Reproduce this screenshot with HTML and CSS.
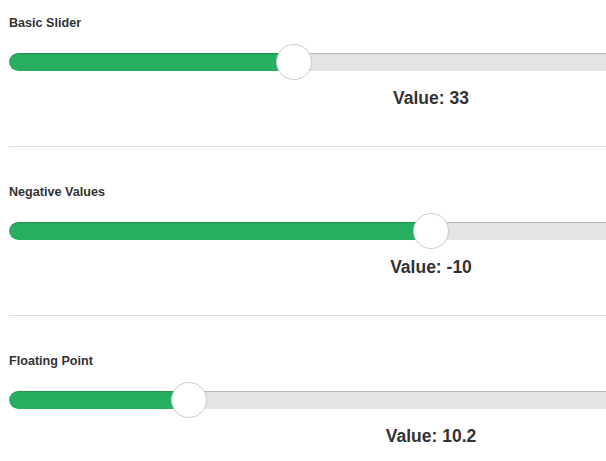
FILE: index.html
```html
<!DOCTYPE html>
<html lang="en">
<head>
<meta charset="utf-8">
<title>Sliders</title>
<link rel="stylesheet" href="styles.css">
</head>
<body>
  <div class="viewport">
    <div class="page">
      <section class="demo first">
        <div class="label">Basic Slider</div>
        <div class="slider" style="--p:0.33">
          <div class="track"><div class="fill"></div></div>
          <div class="thumb"></div>
        </div>
        <div class="value">Value: 33</div>
      </section>
      <section class="demo">
        <div class="label">Negative Values</div>
        <div class="slider" style="--p:0.5">
          <div class="track"><div class="fill"></div></div>
          <div class="thumb"></div>
        </div>
        <div class="value">Value: -10</div>
      </section>
      <section class="demo last">
        <div class="label">Floating Point</div>
        <div class="slider" style="--p:0.2">
          <div class="track"><div class="fill"></div></div>
          <div class="thumb"></div>
        </div>
        <div class="value">Value: 10.2</div>
      </section>
    </div>
  </div>
</body>
</html>
```

FILE: styles.css
```css
html, body {
  margin: 0;
  padding: 0;
  overflow: hidden;
  background: #fff;
}

body {
  font-family: "Liberation Sans", Arial, Helvetica, sans-serif;
  color: #333;
}

.viewport {
  width: 100vw;
  height: 100vh;
  overflow: hidden;
}

.page {
  width: 844px;
  padding: 0 9px;
}

.demo {
  display: flex;
  flex-direction: column;
  padding: 38px 0 38px;
  border-bottom: 1px solid #dedede;
}

.demo.first {
  padding-top: 16px;
}

.demo.last {
  border-bottom: none;
}

.label {
  font-size: 12.6px;
  font-weight: bold;
  line-height: 15px;
  height: 15px;
  color: #333;
}

.slider {
  position: relative;
  height: 36px;
  margin-top: 13px;
}

.track {
  position: absolute;
  left: 0;
  right: 0;
  top: 9px;
  height: 18px;
  border-radius: 9px 0 0 9px;
  background: #e5e5e5;
  box-shadow: inset 0 2px 1px -1px rgba(0, 0, 0, 0.22);
  overflow: hidden;
}

.fill {
  height: 100%;
  width: calc(18px + var(--p) * 808px);
  background: #27ae60;
  border-radius: 9px 0 0 9px;
  box-shadow: inset 0 2px 1px -1px rgba(0, 0, 0, 0.18);
}

.thumb {
  position: absolute;
  top: 0;
  left: calc(var(--p) * 808px);
  width: 34px;
  height: 34px;
  border-radius: 50%;
  background: #fff;
  border: 1px solid #cfcfcf;
  box-shadow: 0 0 1px rgba(0, 0, 0, 0.08);
}

.value {
  margin-top: 8px;
  font-size: 17.5px;
  font-weight: bold;
  line-height: 20px;
  text-align: center;
  color: #333;
}
```
